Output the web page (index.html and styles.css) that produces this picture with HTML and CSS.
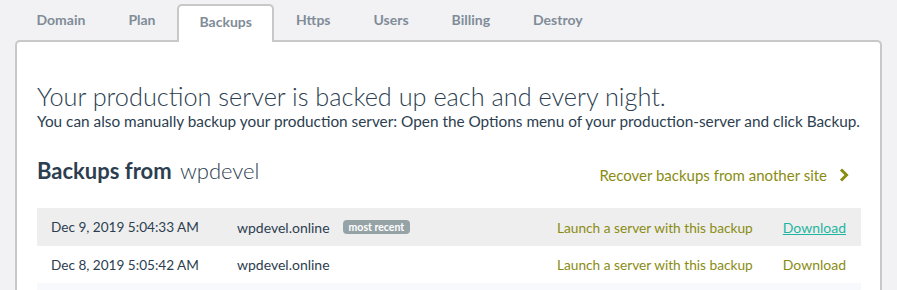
FILE: index.html
```html
<!DOCTYPE html>
<html lang="en">
<head>
    <meta charset="UTF-8">
    <title>Backups</title>
    <link rel="stylesheet" href="styles.css">
</head>
<body>

    <!-- Tabs -->
    <nav class="tabs">
        <a class="tab" href="#">Domain</a>
        <a class="tab" href="#">Plan</a>
        <a class="tab active" href="#">Backups</a>
        <a class="tab" href="#">Https</a>
        <a class="tab" href="#">Users</a>
        <a class="tab" href="#">Billing</a>
        <a class="tab" href="#">Destroy</a>
    </nav>

    <!-- Card -->
    <div class="card">
        <h1>Your production server is backed up each and every night.</h1>
        <p class="intro">You can also manually backup your production server: Open the Options menu of your production-server and click Backup.</p>

        <div class="backups-head">
            <h2>Backups from <span class="site">wpdevel</span></h2>
            <a class="recover" href="#">
                Recover backups from another site
                <svg width="10" height="14" viewBox="0 0 10 14">
                    <path d="M2 1.5 L7.5 7 L2 12.5" fill="none" stroke="currentColor" stroke-width="3"/>
                </svg>
            </a>
        </div>

        <div class="backup-list">
            <div class="backup-row hover">
                <span class="date">Dec 9, 2019 5:04:33 AM</span>
                <span class="domain">wpdevel.online</span>
                <span class="badge">most recent</span>
                <a class="launch" href="#">Launch a server with this backup</a>
                <a class="download" href="#">Download</a>
            </div>
            <div class="backup-row">
                <span class="date">Dec 8, 2019 5:05:42 AM</span>
                <span class="domain">wpdevel.online</span>
                <a class="launch" href="#">Launch a server with this backup</a>
                <a class="download" href="#">Download</a>
            </div>
            <div class="backup-row striped"></div>
        </div>
    </div>

</body>
</html>
```

FILE: styles.css
```css
body {
    font-family: Lato, "Open Sans", sans-serif;
    margin: 0;
    padding: 0;
    background-color: #f2f2f4;
    color: #2c3e50;
    overflow: hidden;
}

a {
    text-decoration: none;
}

/* Tabs */
.tabs {
    display: flex;
    align-items: flex-end;
    padding: 4px 15px 0;
    margin-bottom: -2px;
    position: relative;
    z-index: 1;
}

.tab {
    font-size: 14px;
    font-weight: bold;
    line-height: 17px;
    color: #808c98;
    padding: 7px 21.5px 14px;
}

.tab.active {
    background-color: #fff;
    border: 2px solid #c8c8c8;
    border-bottom: none;
    border-radius: 5px 5px 0 0;
    padding: 7px 20.5px 12px;
}

/* Card */
.card {
    margin: 0 15px;
    background-color: #fff;
    border: 2px solid #c8c8c8;
    border-bottom: none;
    border-radius: 5px 5px 0 0;
    padding: 39px 19px 0 20px;
}

h1 {
    font-size: 25.3px;
    font-weight: 300;
    line-height: 31px;
    margin: 0;
}

.intro {
    font-size: 15.35px;
    font-weight: normal;
    line-height: 18px;
    margin: 0;
}

.backups-head {
    display: flex;
    align-items: center;
    justify-content: space-between;
    margin-top: 28px;
    padding-right: 12px;
}

h2 {
    font-size: 22px;
    font-weight: bold;
    line-height: 26px;
    margin: 0;
}

h2 .site {
    font-weight: 300;
    margin-left: 3px;
}

.recover {
    display: flex;
    align-items: center;
    gap: 12px;
    font-size: 15px;
    color: #8a8c12;
    margin-top: 7px;
}

/* Backups list */
.backup-list {
    margin-top: 24px;
}

.backup-row {
    display: flex;
    align-items: center;
    height: 37px;
    padding: 0 15px 0 14px;
    font-size: 14px;
}

.backup-row.hover {
    background-color: #eeeeee;
    height: 38px;
}

.backup-row.striped {
    background-color: #f7f9fc;
}

.date {
    width: 186px;
    font-size: 13.6px;
}

.badge {
    margin-left: 13px;
    background-color: #96a3a6;
    color: #fff;
    font-size: 10.5px;
    font-weight: bold;
    line-height: 14px;
    padding: 0 6px;
    border-radius: 4px;
}

.launch {
    margin-left: auto;
    font-size: 13.7px;
    color: #8a8c12;
}

.download {
    margin-left: 30px;
    color: #8a8c12;
}

.backup-row.hover .download {
    color: #1fb5a0;
    text-decoration: underline;
}
```
